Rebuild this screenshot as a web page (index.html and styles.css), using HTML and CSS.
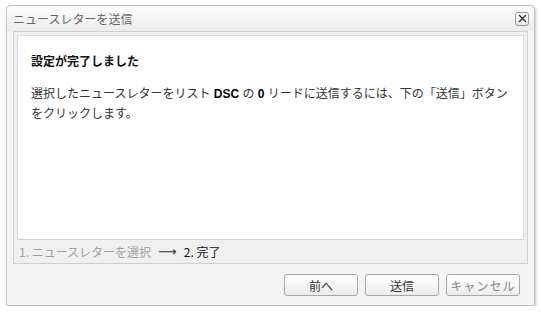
FILE: index.html
```html
<!DOCTYPE html>
<html lang="ja">
<head>
  <meta charset="UTF-8">
  <title>ニュースレターを送信</title>
  <link rel="stylesheet" href="styles.css">
</head>
<body>
  <div class="dialog">
    <div class="titlebar">
      <span class="title">ニュースレターを送信</span>
      <button class="close" title="閉じる">
        <svg width="9" height="9" viewBox="0 0 9 9"><path d="M1 1L8 8M8 1L1 8" stroke="#333" stroke-width="1.4" fill="none"/></svg>
      </button>
    </div>

    <div class="frame">
      <div class="content">
        <h2>設定が完了しました</h2>
        <p>選択したニュースレターをリスト <b>DSC</b> の <b>0</b> リードに送信するには、下の「送信」ボタンをクリックします。</p>
      </div>
      <div class="steps">
        <span class="done">1. ニュースレターを選択</span>
        <span class="arrow">⟶</span>
        <span class="current">2. 完了</span>
      </div>
    </div>

    <div class="buttons">
      <button class="btn">前へ</button>
      <button class="btn">送信</button>
      <button class="btn muted">キャンセル</button>
    </div>
  </div>
</body>
</html>
```

FILE: styles.css
```css
body { margin: 0; background: #fff; font-family: "Liberation Sans", "Noto Sans CJK JP", sans-serif; font-size: 12px; color: #222; }
.dialog { margin: 5px 0 0 6px; width: 527px; height: 299px; border: 1px solid #c4c4c4; border-radius: 5px 5px 2px 2px; background: #f4f4f4; box-shadow: 1px 1px 3px rgba(0,0,0,0.25); display: flex; flex-direction: column; }
.titlebar { height: 25px; padding: 0 5px 0 6px; display: flex; align-items: center; justify-content: space-between; background: linear-gradient(#fdfdfd, #ececec); border-radius: 5px 5px 0 0; }
.title { color: #666; font-size: 12px; font-family: "Noto Sans CJK JP", sans-serif; }
.close { width: 14px; height: 14px; padding: 0; border: 1px solid #999; border-radius: 3px; background: linear-gradient(#fff, #e6e6e6); display: flex; align-items: center; justify-content: center; }
.frame { margin: 0 6px; border: 1px solid #cfcfcf; padding: 3px 3px 0; background: #f0f0f0; }
.content { height: 205px; background: #fff; border: 1px solid #dcdcdc; border-bottom-color: #cfcfcf; padding: 0 12px 0 13px; box-sizing: border-box; }
.content h2 { margin: 16px 0 0; font-size: 12px; font-weight: bold; font-family: "Noto Sans CJK JP", sans-serif; color: #111; }
.content p { margin: 15px 0 0; line-height: 20px; color: #333; font-family: "Liberation Sans", "Noto Sans CJK JP", sans-serif; }
.content b { color: #000; }
.steps { height: 23px; display: flex; align-items: center; gap: 7px; padding: 0 2px; color: #a0a0a0; font-family: "Noto Sans CJK JP", sans-serif; }
.arrow { color: #333; font-family: "DejaVu Sans", sans-serif; font-size: 13px; }
.current { color: #111; }
.buttons { display: flex; justify-content: flex-end; gap: 7px; padding: 10px 14px 0 0; }
.btn { width: 74px; height: 22px; padding: 0; border: 1px solid #a8a8a8; border-radius: 3px; background: linear-gradient(#ffffff, #ececec); font-family: "Noto Sans CJK JP", sans-serif; font-size: 12px; color: #333; }
.btn.muted { color: #888; letter-spacing: 1px; }
```
